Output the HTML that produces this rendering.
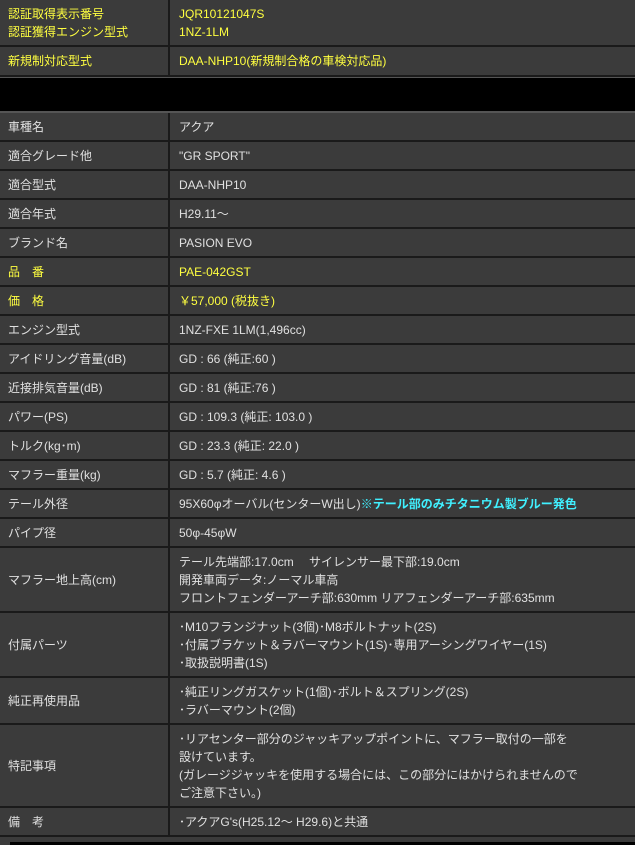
<!DOCTYPE html>
<html><head><meta charset="utf-8"><style>
body{margin:0;width:635px;height:845px;overflow:hidden;background:#1a1a1a;font-family:"Liberation Sans","Noto Sans CJK JP",sans-serif;font-size:12px;color:#e0e0e0}
.r{position:absolute;left:0;width:635px}
.c{position:absolute;top:0;bottom:2px;background:#3b3b3b;display:flex;flex-direction:column;justify-content:center;line-height:18px}
.l{left:0;width:168px;padding-left:8px;box-sizing:border-box}
.v{left:170px;right:0;padding-left:9px}
.y{color:#ffff40}
.cy{color:#40f0ff;font-weight:bold}
</style></head><body>
<div class="r" style="top:0;height:47px"><div class="c l y">認証取得表示番号<br>認証獲得エンジン型式</div><div class="c v y">JQR10121047S<br>1NZ-1LM</div></div>
<div class="r" style="top:47px;height:30px"><div class="c l y">新規制対応型式</div><div class="c v y">DAA-NHP10(新規制合格の車検対応品)</div></div>
<div class="r" style="top:77px;height:36px;background:#000;border-top:1px solid #555;border-bottom:2px solid #555;box-sizing:border-box"></div>
<div class="r" style="top:113px;height:29px"><div class="c l">車種名</div><div class="c v">アクア</div></div>
<div class="r" style="top:142px;height:29px"><div class="c l">適合グレード他</div><div class="c v">"GR SPORT"</div></div>
<div class="r" style="top:171px;height:29px"><div class="c l">適合型式</div><div class="c v">DAA-NHP10</div></div>
<div class="r" style="top:200px;height:29px"><div class="c l">適合年式</div><div class="c v">H29.11～</div></div>
<div class="r" style="top:229px;height:29px"><div class="c l">ブランド名</div><div class="c v">PASION EVO</div></div>
<div class="r" style="top:258px;height:29px"><div class="c l y">品　番</div><div class="c v y">PAE-042GST</div></div>
<div class="r" style="top:287px;height:29px"><div class="c l y">価　格</div><div class="c v y">￥57,000 (税抜き)</div></div>
<div class="r" style="top:316px;height:29px"><div class="c l">エンジン型式</div><div class="c v">1NZ-FXE 1LM(1,496cc)</div></div>
<div class="r" style="top:345px;height:29px"><div class="c l">アイドリング音量(dB)</div><div class="c v">GD : 66 (純正:60 )</div></div>
<div class="r" style="top:374px;height:29px"><div class="c l">近接排気音量(dB)</div><div class="c v">GD : 81 (純正:76 )</div></div>
<div class="r" style="top:403px;height:29px"><div class="c l">パワー(PS)</div><div class="c v">GD : 109.3 (純正: 103.0 )</div></div>
<div class="r" style="top:432px;height:29px"><div class="c l">トルク(kg･m)</div><div class="c v">GD : 23.3 (純正: 22.0 )</div></div>
<div class="r" style="top:461px;height:29px"><div class="c l">マフラー重量(kg)</div><div class="c v">GD : 5.7 (純正: 4.6 )</div></div>
<div class="r" style="top:490px;height:29px"><div class="c l">テール外径</div><div class="c v"><span>95X60φオーバル(センターW出し)<span class="cy">※テール部のみチタニウム製ブルー発色</span></span></div></div>
<div class="r" style="top:519px;height:29px"><div class="c l">パイプ径</div><div class="c v">50φ-45φW</div></div>
<div class="r" style="top:548px;height:65px"><div class="c l">マフラー地上高(cm)</div><div class="c v">テール先端部:17.0cm　 サイレンサー最下部:19.0cm<br>開発車両データ:ノーマル車高<br>フロントフェンダーアーチ部:630mm リアフェンダーアーチ部:635mm</div></div>
<div class="r" style="top:613px;height:65px"><div class="c l">付属パーツ</div><div class="c v">･M10フランジナット(3個)･M8ボルトナット(2S)<br>･付属ブラケット＆ラバーマウント(1S)･専用アーシングワイヤー(1S)<br>･取扱説明書(1S)</div></div>
<div class="r" style="top:678px;height:47px"><div class="c l">純正再使用品</div><div class="c v">･純正リングガスケット(1個)･ボルト＆スプリング(2S)<br>･ラバーマウント(2個)</div></div>
<div class="r" style="top:725px;height:83px"><div class="c l">特記事項</div><div class="c v">･リアセンター部分のジャッキアップポイントに、マフラー取付の一部を<br>設けています。<br>(ガレージジャッキを使用する場合には、この部分にはかけられませんので<br>ご注意下さい。)</div></div>
<div class="r" style="top:808px;height:29px"><div class="c l">備　考</div><div class="c v">･アクアG's(H25.12～ H29.6)と共通</div></div>
<div class="r" style="top:837px;height:8px;background:#3b3b3b"><div style="position:absolute;left:10px;right:0;top:5px;bottom:0;background:#000"></div></div>
</body></html>
